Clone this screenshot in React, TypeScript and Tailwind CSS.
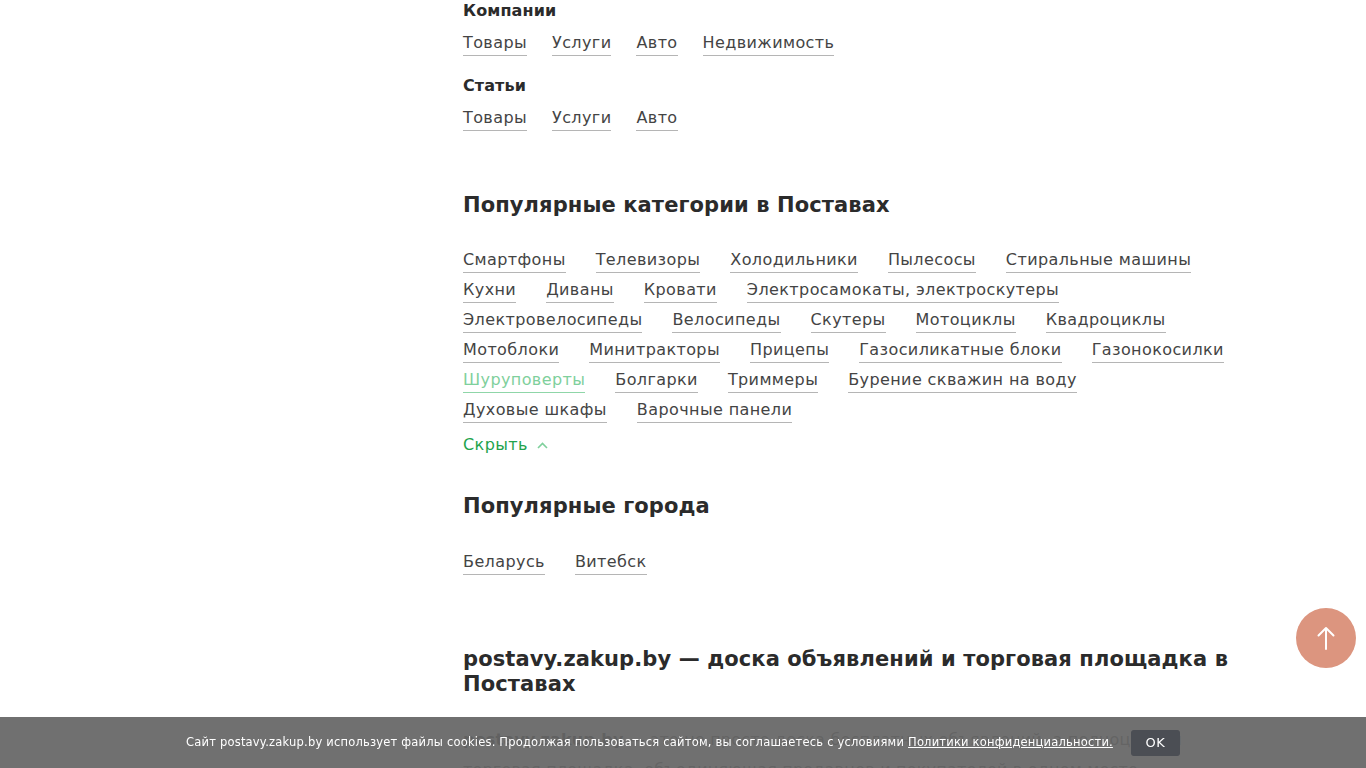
import React from "react";

const font = { fontFamily: '"DejaVu Sans", "Noto Sans", sans-serif' };

function L({ children, active = false }: { children: React.ReactNode; active?: boolean }) {
  return (
    <a
      href="#"
      className={
        "inline-block text-[16px] leading-[20px] pb-[2px] border-b tracking-[0.4px] " +
        (active ? "text-[#7fd09c] border-[#8fd6a8]" : "text-[#444] border-[#b5b5b5]")
      }
    >
      {children}
    </a>
  );
}

const rows: string[][] = [
  ["Смартфоны", "Телевизоры", "Холодильники", "Пылесосы", "Стиральные машины"],
  ["Кухни", "Диваны", "Кровати", "Электросамокаты, электроскутеры"],
  ["Электровелосипеды", "Велосипеды", "Скутеры", "Мотоциклы", "Квадроциклы"],
  ["Мотоблоки", "Минитракторы", "Прицепы", "Газосиликатные блоки", "Газонокосилки"],
  ["Шуруповерты", "Болгарки", "Триммеры", "Бурение скважин на воду"],
  ["Духовые шкафы", "Варочные панели"],
];

export default function App() {
  return (
    <div className="min-h-[768px] bg-white relative" style={font}>
      <div className="ml-[463px] w-[790px] pt-[1px] pb-[60px]">
        <h3 className="text-[16px] leading-[20px] font-bold text-[#2b2b2b] tracking-[0.1px]">Компании</h3>
        <div className="mt-[12px] flex gap-[25px]">
          <L>Товары</L>
          <L>Услуги</L>
          <L>Авто</L>
          <L>Недвижимость</L>
        </div>
        <h3 className="mt-[20px] text-[16px] leading-[20px] font-bold text-[#2b2b2b] tracking-[0.1px]">Статьи</h3>
        <div className="mt-[12px] flex gap-[25px]">
          <L>Товары</L>
          <L>Услуги</L>
          <L>Авто</L>
        </div>

        <h2 className="mt-[60px] text-[21px] leading-[28px] font-bold text-[#2b2b2b] tracking-[0.1px]">
          Популярные категории в Поставах
        </h2>
        <div className="mt-[31px] flex flex-col gap-[7px]">
          {rows.map((r, i) => (
            <div key={i} className="flex gap-[30px]">
              {r.map((t) => (
                <L key={t} active={t === "Шуруповерты"}>
                  {t}
                </L>
              ))}
            </div>
          ))}
        </div>
        <button className="mt-[12px] flex items-center gap-[9px] text-[16px] leading-[20px] text-[#22a34c] tracking-[0.4px]">
          Скрыть
          <svg width="11" height="7" viewBox="0 0 11 7" fill="none">
            <path d="M1 6 L5.5 1.5 L10 6" stroke="#7fd09c" strokeWidth="1.6" />
          </svg>
        </button>

        <h2 className="mt-[37px] text-[21px] leading-[28px] font-bold text-[#2b2b2b] tracking-[0.1px]">
          Популярные города
        </h2>
        <div className="mt-[32px] flex gap-[30px]">
          <L>Беларусь</L>
          <L>Витебск</L>
        </div>

        <h2 className="mt-[72px] text-[21px] leading-[25px] font-bold text-[#2b2b2b] tracking-[0.1px]">
          postavy.zakup.by — доска объявлений и торговая площадка в<br />
          Поставах
        </h2>
        <p className="mt-[28px] text-[16px] leading-[30px] text-[#666] tracking-[0.2px]">
          <b className="font-bold text-[#444]">postavy.zakup.by</b> — это не просто доска бесплатных объявлений, а полноценная
          торговая площадка, объединяющая продавцов и покупателей в одном месте.
        </p>
      </div>

      <button className="fixed right-[10px] bottom-[100px] w-[60px] h-[60px] rounded-full bg-[#dc957f] flex items-center justify-center">
        <svg width="20" height="24" viewBox="0 0 20 24" fill="none">
          <path d="M10 23 V2 M2.5 9.5 L10 2 L17.5 9.5" stroke="#ffffff" strokeWidth="2" strokeLinecap="round" strokeLinejoin="round" />
        </svg>
      </button>

      <div className="fixed left-0 right-0 bottom-0 h-[51px] bg-[rgba(100,100,100,0.92)] flex items-center justify-center gap-[18px]">
        <span className="text-[11.5px] text-white tracking-[0.2px]">
          Сайт postavy.zakup.by использует файлы cookies. Продолжая пользоваться сайтом, вы соглашаетесь с условиями{" "}
          <a href="#" className="underline">Политики конфиденциальности.</a>
        </span>
        <button className="w-[49px] h-[26px] rounded-[3px] bg-[#4b4e54] text-white text-[13px] tracking-[0.5px]">OK</button>
      </div>
    </div>
  );
}
